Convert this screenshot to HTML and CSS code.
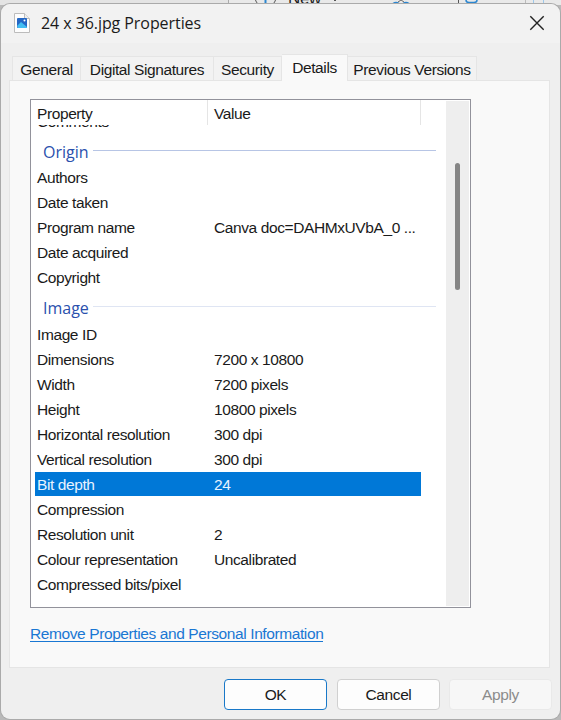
FILE: index.html
```html
<!DOCTYPE html>
<html lang="en">
<head>
<meta charset="utf-8">
<title>24 x 36.jpg Properties</title>
<link rel="stylesheet" href="styles.css">
</head>
<body>
<div class="backdrop">
  <svg class="toolbar" width="561" height="5" viewBox="0 0 561 5">
    <rect x="0" width="229" height="5" fill="#e4e4e4"/>
    <rect x="229" width="332" height="5" fill="#e9e9e9"/>
    <path d="M228.500 0V5" stroke="#aaa"/>
    <path d="M255.500 0Q256 2 258 4M275.500 0Q275 2 273 4" fill="none" stroke="#555"/>
    <path d="M265.500 0V3" stroke="#2b86d0" stroke-width="2"/>
    <path d="M334 0l1 1 1-1" fill="none" stroke="#555"/>
    <path d="M393 3.500q3-2 6 0M403 3.500q3-2 6 0" fill="none" stroke="#2b86d0" stroke-width="1.500"/>
    <path d="M398 2l3-2 3 2" fill="none" stroke="#666"/>
    <path d="M458.500 0V4" stroke="#555"/>
    <path d="M466 0q0 2.500 3 2.500h5q3 0 3-2.500" fill="none" stroke="#2b86d0" stroke-width="1.500"/>
    <path d="M525.500 0V4" stroke="#bbb"/>
    <path d="M533.500 0V4M543.500 0V4" stroke="#9cc8ea"/>
  </svg>
  <span class="new">New</span>
</div>
<main class="window">
  <header class="titlebar">
    <svg class="file" width="18" height="22" viewBox="0 0 18 22">
      <path d="M1.500 1.500H11.500L16.500 6.500V20.500H1.500Z" fill="#fdfdfd" stroke="#bcbcbc"/>
      <path d="M11.500 1.500V6.500H16.500" fill="#eee" stroke="#bcbcbc"/>
      <rect x="4" y="6" width="10" height="10" rx="1" fill="#2467c5"/>
      <path d="M4 14L8 10L14 15V16H5Z" fill="#42bdf1"/>
      <circle cx="11.500" cy="8.500" r="1" fill="#fff"/>
    </svg>
    <h1>24 x 36.jpg Properties</h1>
    <svg class="close" width="16" height="16" viewBox="0 0 16 16"><path d="M1.300 1.300L14.700 14.700M14.700 1.300L1.300 14.700" stroke="#222" stroke-width="1.400"/></svg>
  </header>
  <nav class="tabs">
    <span class="tab general">General</span>
    <span class="tab digital">Digital Signatures</span>
    <span class="tab security">Security</span>
    <span class="tab details">Details</span>
    <span class="tab previous">Previous Versions</span>
  </nav>
  <section class="panel">
    <div class="list">
      <div class="content">
        <div class="head"><span>Property</span><span>Value</span></div>
        <div class="rows">
          <div class="row cut"><span>Comments</span></div>
          <div class="group"><b>Origin</b><i></i></div>
          <div class="row"><span>Authors</span></div>
          <div class="row"><span>Date taken</span></div>
          <div class="row"><span>Program name</span><span>Canva doc=DAHMxUVbA_0 ...</span></div>
          <div class="row"><span>Date acquired</span></div>
          <div class="row"><span>Copyright</span></div>
          <div class="group pale"><b>Image</b><i></i></div>
          <div class="row"><span>Image ID</span></div>
          <div class="row"><span>Dimensions</span><span>7200 x 10800</span></div>
          <div class="row"><span>Width</span><span>7200 pixels</span></div>
          <div class="row"><span>Height</span><span>10800 pixels</span></div>
          <div class="row"><span>Horizontal resolution</span><span>300 dpi</span></div>
          <div class="row"><span>Vertical resolution</span><span>300 dpi</span></div>
          <div class="row selected"><span>Bit depth</span><span>24</span></div>
          <div class="row"><span>Compression</span></div>
          <div class="row"><span>Resolution unit</span><span>2</span></div>
          <div class="row"><span>Colour representation</span><span>Uncalibrated</span></div>
          <div class="row"><span>Compressed bits/pixel</span></div>
        </div>
      </div>
      <div class="scrollbar"><div class="thumb"></div></div>
    </div>
    <a class="remove">Remove Properties and Personal Information</a>
  </section>
  <footer class="buttons">
    <button class="primary">OK</button>
    <button>Cancel</button>
    <button disabled>Apply</button>
  </footer>
</main>
</body>
</html>
```
FILE: styles.css
```css
* { box-sizing: border-box; }
body {
  margin: 0;
  width: 561px;
  height: 720px;
  overflow: hidden;
  background: #b9b9b9;
  padding: 4px 1px 1px;
  font: 15.5px/24px "Liberation Sans", Arial, sans-serif;
  letter-spacing: -0.4px;
  color: #1a1a1a;
}
.backdrop { position: absolute; top: 0; left: 0; width: 561px; height: 5px; overflow: hidden; }
.toolbar { display: block; }
.new { position: absolute; left: 288px; top: -10px; font-size: 17px; line-height: 18px; }
.window {
  position: relative;
  height: 715px;
  width: 559px;
  border-radius: 9px;
  background: linear-gradient(#f2f2f2 0 39px, #efefef 39px);
  box-shadow: 0 0 0 1px #aaa;
  overflow: hidden;
}
.titlebar { display: flex; align-items: center; height: 39px; padding: 0 15px 1px 12px; }
.file { flex: none; margin: -1px 10px 0 0; }
h1 { margin: 0; flex: 1; font: 400 16px/24px "Open Sans", "Noto Sans", sans-serif; letter-spacing: -0.07px; }
.tabs { display: flex; align-items: flex-end; height: 37px; padding-left: 11px; position: relative; z-index: 1; }
.tab {
  height: 24px;
  border: 1px solid #e5e5e5;
  border-bottom: 0;
  border-left-width: 0;
  background: #f2f2f2;
  text-align: center;
  white-space: nowrap;
  line-height: 25px;
}
.general { width: 69px; border-left-width: 1px; }
.digital { width: 133px; }
.security { width: 68px; }
.details { width: 66px; height: 27px; margin-bottom: -1px; background: #f9f9f9; }
.previous { width: 129px; }
.panel {
  margin: 0 0 0 8px;
  width: 541px;
  height: 588px;
  border: 1px solid #e5e5e5;
  background: #f9f9f9;
  padding: 18px 0 0 20px;
}
.list {
  display: flex;
  width: 441px;
  height: 509px;
  border: 1px solid #92929b;
  background: #fff;
}
.content { width: 415px; flex: none; }
.head { display: flex; height: 25px; width: 390px; border-right: 1px solid #e5e5e5; background: #fff; line-height: 27px; }
.head span:first-child { width: 177px; padding-left: 6px; border-right: 1px solid #e5e5e5; }
.head span:last-child { padding-left: 6px; }
.rows { overflow: hidden; height: 481px; display: flex; flex-direction: column; }
.row { display: flex; flex: none; height: 25px; width: 390px; padding-left: 6px; white-space: nowrap; }
.pale ~ .row { line-height: 26px; }
.row span:first-child { width: 177px; }
.cut { margin-top: -15px; }
.selected { height: 24px; width: 386px; margin: 0 0 1px 4px; padding-left: 2px; background: #0078d7; color: #e8f3ff; }
.group { display: flex; flex: none; height: 31px; padding: 0 10px 0 12px; }
.group b { font: 400 16px/34px "Open Sans", "Noto Sans", sans-serif; color: #2a50ad; letter-spacing: 0; }
.group i { flex: 1; height: 1px; margin: 15px 0 0 4px; background: #b7c5e5; }
.pale i { background: #dfe5f3; }
.scrollbar { width: 23px; margin: 1px 0; background: #eee; padding: 62px 0 0 9px; }
.thumb { width: 5px; height: 127px; border-radius: 3px; background: #858585; }
.remove {
  display: inline-block;
  margin-top: 14px;
  height: 20px;
  line-height: 23px;
  color: #1977d3;
  border-bottom: 1px solid #1977d3;
  white-space: nowrap;
}
.buttons { display: flex; gap: 10px; padding: 11px 0 0 223px; }
.buttons button {
  width: 103px;
  height: 31px;
  padding: 0;
  border: 1px solid #d0d0d0;
  border-radius: 4px;
  background: #fdfdfd;
  font: inherit;
  letter-spacing: inherit;
  color: #1a1a1a;
}
.buttons .primary { border-color: #1978c8; }
.buttons button:disabled { margin-left: -1px; color: #8b8b8b; background: #f7f7f7; border-color: #e9e9e9; }
```
